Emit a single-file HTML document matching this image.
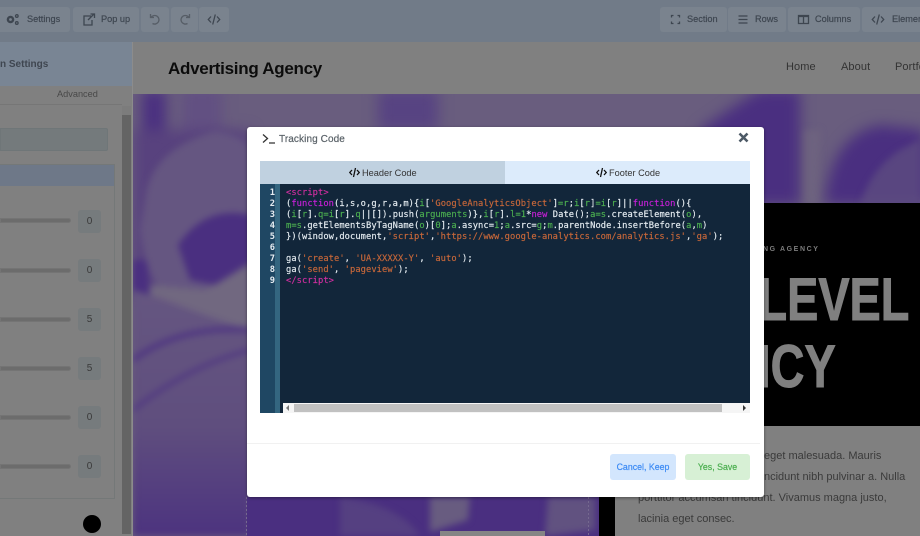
<!DOCTYPE html>
<html><head><meta charset="utf-8"><style>
html,body{margin:0;padding:0}
body{width:920px;height:536px;overflow:hidden;position:relative;background:#717b88;font-family:"Liberation Sans",sans-serif}
.a{position:absolute}
.b{position:absolute;top:7px;height:25px;background:#7a838e;border-radius:3px;color:#3e4650;font-size:9.200px;-webkit-text-stroke:.2px #3e4650;line-height:25px;white-space:nowrap}
.b span{position:absolute;top:0}
.b svg{position:absolute;top:6px;fill:none;stroke:#3e4650;stroke-width:1.300}
.sl{position:absolute;left:0;width:71px;height:5px;background:#6c6c6c;border:1px solid #747474;box-sizing:border-box;border-radius:0 3px 3px 0}
.v{position:absolute;left:78px;width:23px;height:23px;background:#767b7d;border-radius:3px;color:#3a3a3a;font-size:10px;text-align:center;line-height:23px}
.code{position:absolute;left:286px;top:188px;font-family:"DejaVu Sans Mono",monospace;font-size:8.75px;letter-spacing:.065px;line-height:11px;color:#e6edf2;white-space:pre;-webkit-text-stroke:.15px}
.code i{font-style:normal}
.t{color:#d22fa0}.k{color:#c820d8}.g{color:#4caf50}.s{color:#c9683a}
.nums{position:absolute;left:260px;top:188px;width:15px;text-align:right;font-family:"DejaVu Sans Mono",monospace;font-size:8.75px;font-weight:bold;line-height:11px;color:#e6edf2}
.p{position:absolute;color:#3a3a3a;font-size:11px;line-height:21px;white-space:nowrap;font-family:"Liberation Sans",sans-serif}
.m{-webkit-text-stroke:.2px}
</style></head><body>

<!-- toolbar -->
<div class="b" style="left:-6px;width:76px"><svg style="left:12px" width="13" height="13" viewBox="0 0 13 13"><circle cx="4.500" cy="6.500" r="2.600" stroke-width="2.400"/><circle cx="10.800" cy="3" r="1.300"/><circle cx="10.800" cy="10" r="1.300"/></svg><span style="left:33px">Settings</span></div>
<div class="b" style="left:73px;width:66px"><svg style="left:9px" width="14" height="13" viewBox="0 0 14 13"><path d="M9 3H2v9h8V7M6 7l6-6M8.500 1H12.500V5"/></svg><span style="left:28px">Pop up</span></div>
<div class="b" style="left:141px;width:28px"><svg style="left:8px" width="12" height="12" viewBox="0 0 12 12"><path d="M1.500 1v3.500H5M2 4.500A4.300 4.300 0 1 1 3.500 10.500" stroke="#565d66"/></svg></div>
<div class="b" style="left:171px;width:27px"><svg style="left:8px" width="12" height="12" viewBox="0 0 12 12"><path d="M10.500 1v3.500H7M10 4.500A4.300 4.300 0 1 0 8.500 10.500" stroke="#565d66"/></svg></div>
<div class="b" style="left:199px;width:30px"><svg style="left:8px" width="14" height="13" viewBox="0 0 14 13"><path d="M4 3.500L1.300 6.500 4 9.500M10 3.500l2.700 3-2.700 3M8.300 1.500l-2.600 10"/></svg></div>

<div class="b" style="left:660px;width:67px"><svg style="left:9px" width="13" height="13" viewBox="0 0 13 13"><path d="M2.500 4.500V2.500h2M8.500 2.500h2v2M10.500 8.500v2h-2M4.500 10.500h-2v-2"/></svg><span style="left:27px">Section</span></div>
<div class="b" style="left:728px;width:58px"><svg style="left:9px" width="13" height="13" viewBox="0 0 13 13"><path d="M1.500 3h9M1.500 6.500h9M1.500 10h9"/></svg><span style="left:27px">Rows</span></div>
<div class="b" style="left:788px;width:72px"><svg style="left:9px" width="14" height="13" viewBox="0 0 14 13"><path d="M1.500 2.500h10v8h-10zM6.500 2.500v8M1.500 3.500h10"/></svg><span style="left:27px">Columns</span></div>
<div class="b" style="left:862px;width:70px"><svg style="left:9px" width="14" height="13" viewBox="0 0 14 13"><path d="M4 3.500L1.300 6.500 4 9.500M10 3.500l2.700 3-2.700 3M8.300 1.500l-2.600 10"/></svg><span style="left:30px">Elements</span></div>

<!-- sidebar -->
<div class="a" style="left:0;top:42px;width:133px;height:494px;background:#808080"></div>
<div class="a" style="left:0;top:42px;width:132px;height:44px;background:#798594"></div>
<div class="a" style="left:0;top:59px;color:#3f4650;font-size:10px;font-weight:bold;white-space:nowrap">n Settings</div>
<div class="a" style="left:57px;top:89px;color:#484848;font-size:9.200px;white-space:nowrap">Advanced</div>
<div class="a" style="left:0;top:104px;width:122px;height:1px;background:#767676"></div>
<div class="a" style="left:0;top:128px;width:108px;height:23px;background:#747a7c;border:1px solid #6f7678;box-sizing:border-box;border-radius:0 2px 2px 0"></div>
<div class="a" style="left:0;top:164px;width:115px;height:335px;border:1px solid #747878;border-left:0;box-sizing:border-box"></div>
<div class="a" style="left:0;top:165px;width:114px;height:21px;background:#6e7888"></div>
<div class="sl" style="top:218px"></div><div class="v" style="top:210px">0</div>
<div class="sl" style="top:268px"></div><div class="v" style="top:259px">0</div>
<div class="sl" style="top:317px"></div><div class="v" style="top:308px">5</div>
<div class="sl" style="top:366px"></div><div class="v" style="top:357px">5</div>
<div class="sl" style="top:415px"></div><div class="v" style="top:406px">0</div>
<div class="sl" style="top:464px"></div><div class="v" style="top:455px">0</div>
<div class="a" style="left:83px;top:515px;width:18px;height:18px;border-radius:50%;background:#000"></div>
<div class="a" style="left:122px;top:106px;width:9px;height:428px;background:#646464"></div>
<div class="a" style="left:122px;top:106px;width:9px;height:9px;background:#7c7c7c"></div>
<div class="a" style="left:132px;top:42px;width:1px;height:494px;background:#8c8c8c"></div>

<!-- page header -->
<div class="a" style="left:133px;top:42px;width:787px;height:52px;background:#808080"></div>
<div class="a" style="left:168px;top:59px;font-size:17px;font-weight:bold;color:#0c0c0c;white-space:nowrap;letter-spacing:-.28px">Advertising Agency</div>
<div class="a" style="left:786px;top:61px;font-size:11px;color:#333;white-space:nowrap;letter-spacing:.1px">Home</div>
<div class="a" style="left:841px;top:61px;font-size:11px;color:#333;white-space:nowrap;letter-spacing:.1px">About</div>
<div class="a" style="left:895px;top:61px;font-size:11px;color:#333;white-space:nowrap;letter-spacing:.1px">Portfolio</div>

<!-- hero photo -->
<svg class="a" style="left:133px;top:94px" width="787" height="442" viewBox="133 94 787 442">
<defs>
<filter id="b1" x="-30%" y="-30%" width="160%" height="160%" color-interpolation-filters="sRGB"><feGaussianBlur stdDeviation="7"/></filter>
<filter id="b2" x="-30%" y="-30%" width="160%" height="160%" color-interpolation-filters="sRGB"><feGaussianBlur stdDeviation="3.500"/></filter>
<linearGradient id="sh" x1="0" y1="0" x2="0" y2="1"><stop offset="0" stop-color="#655680"/><stop offset=".55" stop-color="#5f4e7e"/><stop offset="1" stop-color="#4c337f"/></linearGradient>
</defs>
<rect x="133" y="94" width="787" height="442" fill="#695d7e"/>
<g filter="url(#b1)">
<rect x="142" y="90" width="24" height="50" fill="#4a2f80"/>
<rect x="182" y="88" width="40" height="45" fill="#625082"/>
<rect x="378" y="90" width="60" height="40" fill="#574382"/>
<path d="M700 130Q735 105 760 90H800V205H700Z" fill="#4a2f80"/>
<path d="M825 205Q830 135 880 125L925 130V205Z" fill="#4a2f80"/>
<path d="M133 130H250V300H133Z" fill="#58427e"/>
</g>
<g filter="url(#b2)">
<path d="M133 260H147L150 300 133 296Z" fill="#4a2f80"/>
<path d="M145 200Q150 150 215 131Q245 135 250 150V290L160 290Q145 270 140 230Z" fill="#655681"/>
<path d="M178 245Q205 205 250 215V262L215 285 190 280Z" fill="#4a2f80"/>
<path d="M150 285L205 290 250 265V330L205 315 150 295Z" fill="#716880"/>
<path d="M133 290L150 295 205 315 250 330V536H133Z" fill="url(#sh)"/>
<path d="M133 360Q180 325 250 330" stroke="#4e3482" stroke-width="5" fill="none"/>
<path d="M133 410Q190 365 250 350" stroke="#4e3482" stroke-width="3.500" fill="none"/>
<path d="M804 130H820L818 205H804Z" fill="#716880" opacity=".6"/>
<path d="M860 205Q870 170 900 150L920 140V205Z" fill="#605080" opacity=".7"/>
</g>
<rect x="247" y="497" width="352" height="39" fill="#4a2f80"/>
<g filter="url(#b2)">
<path d="M340 497Q400 505 420 536H340Z" fill="#554081"/>
<path d="M430 497H470L468 520 430 532Z" fill="#685c80"/>
<path d="M548 497H595V530L545 536Z" fill="#615280"/>
</g>
<rect x="440" y="531" width="105" height="5" fill="#858585"/>
<path d="M246.500 497V536M588.500 497V536" stroke="#75688f" stroke-dasharray="2 2" fill="none"/>
</svg>

<!-- black hero card -->
<div class="a" style="left:599px;top:203px;width:321px;height:333px;background:#000"></div>
<div class="a" style="left:763px;top:244px;font-size:7px;font-weight:bold;color:#7c7c7c;letter-spacing:1.600px;white-space:nowrap;line-height:12px">NG AGENCY</div>
<div class="a" style="left:700px;top:265px;width:209px;height:70px;overflow:hidden"><div class="a" style="right:0;top:0;font-size:60px;line-height:70px;font-weight:bold;color:#808080;-webkit-text-stroke:1px #808080;white-space:nowrap;transform:scaleX(.78);transform-origin:100% 50%">LEVEL</div></div>
<div class="a" style="left:700px;top:332px;width:136px;height:70px;overflow:hidden"><div class="a" style="right:0;top:0;font-size:60px;line-height:70px;font-weight:bold;color:#808080;-webkit-text-stroke:1px #808080;white-space:nowrap;transform:scaleX(.78);transform-origin:100% 50%">NCY</div></div>
<div class="a" style="left:615px;top:426px;width:305px;height:110px;background:#808080"></div>
<div class="p" style="left:764px;top:446px">eget malesuada. Mauris</div>
<div class="p" style="left:764px;top:467px">ncidunt nibh pulvinar a. Nulla</div>
<div class="p" style="left:638px;top:488px">porttitor accumsan tincidunt. Vivamus magna justo,</div>
<div class="p" style="left:638px;top:509px">lacinia eget consec.</div>

<!-- modal -->
<div class="a" style="left:247px;top:127px;width:517px;height:370px;background:#fff;border-radius:3px;box-shadow:0 1px 3px rgba(0,0,0,.4)"></div>
<svg class="a" style="left:262px;top:133px" width="14" height="12" viewBox="0 0 14 12" fill="none" stroke="#333" stroke-width="1.300"><path d="M1 1.500l4.500 4-4.500 4M7 10h6"/></svg>
<div class="a m" style="left:279px;top:134px;font-size:10px;color:#5a6268;line-height:12px;white-space:nowrap;letter-spacing:.1px">Tracking Code</div>
<svg class="a" style="left:738px;top:132px" width="11" height="11" viewBox="0 0 11 11" fill="none" stroke="#4d5a66" stroke-width="2.600"><path d="M1.500 1.500l8 8M9.500 1.500l-8 8"/></svg>

<div class="a" style="left:260px;top:161px;width:245px;height:23px;background:#c0d1e0"></div>
<div class="a" style="left:505px;top:161px;width:245px;height:23px;background:#dcebfb"></div>
<svg class="a" style="left:349px;top:167px" width="11" height="11" viewBox="0 0 11 11" fill="none" stroke="#111" stroke-width="1.300"><path d="M3 3L.8 5.500 3 8M8 3l2.200 2.500L8 8M6.500 1l-2 9"/></svg>
<div class="a" style="left:362px;top:167px;font-size:9.200px;color:#333;line-height:13px;white-space:nowrap">Header Code</div>
<svg class="a" style="left:596px;top:167px" width="11" height="11" viewBox="0 0 11 11" fill="none" stroke="#111" stroke-width="1.300"><path d="M3 3L.8 5.500 3 8M8 3l2.200 2.500L8 8M6.500 1l-2 9"/></svg>
<div class="a" style="left:609px;top:167px;font-size:9.200px;color:#333;line-height:13px;white-space:nowrap">Footer Code</div>

<div class="a" style="left:260px;top:184px;width:490px;height:229px;background:#12263a"></div>
<div class="a" style="left:260px;top:184px;width:15px;height:229px;background:#1f4763"></div>
<div class="a" style="left:275px;top:184px;width:5px;height:229px;background:#346680"></div>
<div class="nums">1<br>2<br>3<br>4<br>5<br>6<br>7<br>8<br>9</div>
<div class="code"><i class="t">&lt;script&gt;</i>
(<i class="k">function</i>(i,s,o,g,r,a,m){<i class="g">i</i>[<i class="s">'GoogleAnalyticsObject'</i>]<i class="g">=r</i>;<i class="g">i</i>[<i class="g">r</i>]<i class="g">=i</i>[<i class="g">r</i>]||<i class="k">function</i>(){
(<i class="g">i</i>[<i class="g">r</i>].<i class="g">q=i</i>[<i class="g">r</i>].<i class="g">q</i>||[]).push(<i class="g">arguments</i>)},<i class="g">i</i>[<i class="g">r</i>].<i class="g">l=1</i>*<i class="k">new</i> Date();<i class="g">a=s</i>.createElement(<i class="g">o</i>),
<i class="g">m=s</i>.getElementsByTagName(<i class="g">o</i>)[<i class="g">0</i>];<i class="g">a</i>.async=<i class="g">1</i>;<i class="g">a</i>.src=<i class="g">g</i>;<i class="g">m</i>.parentNode.insertBefore(<i class="g">a</i>,<i class="g">m</i>)
})(window,document,<i class="s">'script'</i>,<i class="s">'https://www.google-analytics.com/analytics.js'</i>,<i class="s">'ga'</i>);

ga(<i class="s">'create'</i>, <i class="s">'UA-XXXXX-Y'</i>, <i class="s">'auto'</i>);
ga(<i class="s">'send'</i>, <i class="s">'pageview'</i>);
<i class="t">&lt;/script&gt;</i></div>

<!-- horizontal scrollbar -->
<div class="a" style="left:283px;top:403px;width:467px;height:10px;background:#f5f5f5"></div>
<div class="a" style="left:294px;top:404px;width:428px;height:8px;background:#c1c1c1"></div>
<div class="a" style="left:286px;top:405px;width:0;height:0;border:3px solid transparent;border-right:3px solid #777;border-left:0"></div>
<div class="a" style="left:743px;top:405px;width:0;height:0;border:3px solid transparent;border-left:3px solid #333;border-right:0"></div>

<div class="a" style="left:247px;top:443px;width:513px;height:1px;background:#f1f1f1"></div>
<div class="a m" style="left:610px;top:454px;width:66px;height:26px;background:#d3e6fd;border-radius:3px;color:#3d8bf5;font-size:8.800px;text-align:center;line-height:26px">Cancel, Keep</div>
<div class="a m" style="left:685px;top:454px;width:65px;height:26px;background:#d7f0d5;border-radius:3px;color:#4caf50;font-size:8.800px;text-align:center;line-height:26px">Yes, Save</div>
</body></html>
